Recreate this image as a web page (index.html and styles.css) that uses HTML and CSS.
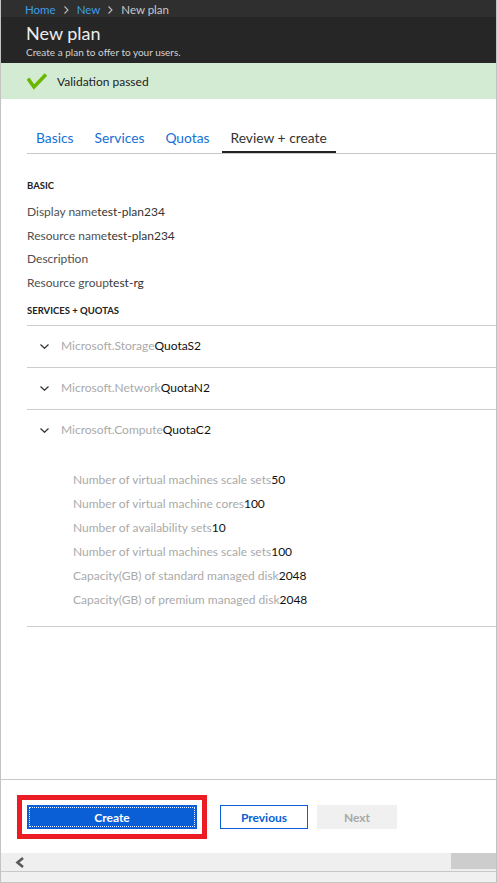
FILE: index.html
```html
<!DOCTYPE html>
<html lang="en">
<head>
<meta charset="utf-8">
<title>New plan</title>
<link rel="stylesheet" href="styles.css">
</head>
<body>
<div class="page">
  <div class="crumbs">
    <span class="crumb-link">Home</span>
    <svg class="crumb-sep" width="5" height="8" viewBox="0 0 5 8"><polyline points="0.5,0.5 4,4 0.5,7.5" fill="none" stroke="#bdbdbd" stroke-width="1.1"/></svg>
    <span class="crumb-link">New</span>
    <svg class="crumb-sep" width="5" height="8" viewBox="0 0 5 8"><polyline points="0.5,0.5 4,4 0.5,7.5" fill="none" stroke="#bdbdbd" stroke-width="1.1"/></svg>
    <span class="crumb-cur">New plan</span>
  </div>
  <div class="head">
    <div class="title">New plan</div>
    <div class="sub">Create a plan to offer to your users.</div>
  </div>
  <div class="banner">
    <svg class="check" width="20" height="17" viewBox="0 0 20 17"><polyline points="1,5.5 7,14 19,1.5" fill="none" stroke="#6bb700" stroke-width="3.6" stroke-linejoin="miter"/></svg>
    <span class="banner-text">Validation passed</span>
  </div>
  <div class="main">
    <div class="tabs">
      <div class="tab">Basics</div>
      <div class="tab">Services</div>
      <div class="tab">Quotas</div>
      <div class="tab active">Review + create</div>
    </div>
    <div class="sect">BASIC</div>
    <div class="row">Display name<span>test-plan234</span></div>
    <div class="row">Resource name<span>test-plan234</span></div>
    <div class="row">Description</div>
    <div class="row">Resource group<span>test-rg</span></div>
    <div class="sect sect2">SERVICES + QUOTAS</div>
    <div class="acc">
      <div class="acc-item">
        <div class="acc-head">
          <svg class="chev" width="9" height="5" viewBox="0 0 9 5"><polyline points="0.5,0.5 4.5,4.3 8.5,0.5" fill="none" stroke="#333" stroke-width="1.2"/></svg>
          <span class="ns">Microsoft.Storage</span><span class="q">QuotaS2</span>
        </div>
      </div>
      <div class="acc-item">
        <div class="acc-head">
          <svg class="chev" width="9" height="5" viewBox="0 0 9 5"><polyline points="0.5,0.5 4.5,4.3 8.5,0.5" fill="none" stroke="#333" stroke-width="1.2"/></svg>
          <span class="ns">Microsoft.Network</span><span class="q">QuotaN2</span>
        </div>
      </div>
      <div class="acc-item">
        <div class="acc-head">
          <svg class="chev" width="9" height="5" viewBox="0 0 9 5"><polyline points="0.5,0.5 4.5,4.3 8.5,0.5" fill="none" stroke="#333" stroke-width="1.2"/></svg>
          <span class="ns">Microsoft.Compute</span><span class="q">QuotaC2</span>
        </div>
        <div class="acc-body">
          <div class="detail">Number of virtual machines scale sets<span>50</span></div>
          <div class="detail">Number of virtual machine cores<span>100</span></div>
          <div class="detail">Number of availability sets<span>10</span></div>
          <div class="detail">Number of virtual machines scale sets<span>100</span></div>
          <div class="detail">Capacity(GB) of standard managed disk<span>2048</span></div>
          <div class="detail">Capacity(GB) of premium managed disk<span>2048</span></div>
        </div>
      </div>
    </div>
  </div>
  <div class="footer">
    <div class="highlight">
      <button class="btn btn-create">Create</button>
    </div>
    <button class="btn btn-prev">Previous</button>
    <button class="btn btn-next">Next</button>
  </div>
  <div class="hscroll">
    <svg class="scroll-arrow" width="10" height="11" viewBox="0 0 10 11"><polyline points="8,1 2.5,5.5 8,10" fill="none" stroke="#5a5a5a" stroke-width="2.6"/></svg>
    <div class="thumb"></div>
  </div>
  <div class="bottom-strip"></div>
</div>
</body>
</html>
```

FILE: styles.css
```css
* { box-sizing: border-box; }
html, body { margin: 0; padding: 0; }
body { font-family: Lato, "Open Sans", sans-serif; background: #fff; }

.page {
  width: 497px;
  height: 883px;
  display: flex;
  flex-direction: column;
  border-left: 1px solid #c3c3c3;
  border-right: 1px solid #c3c3c3;
  border-bottom: 1px solid #c3c3c3;
}

.crumbs {
  height: 17px;
  flex: none;
  background: #2f2f2f;
  display: flex;
  align-items: center;
  padding: 3px 0 0 24px;
  font-size: 11.5px;
  line-height: 14px;
}
.crumb-link { color: #3d9ce9; }
.crumb-cur { color: #c8c8c8; }
.crumb-sep { margin: 0 8px; }

.head {
  height: 46px;
  flex: none;
  background: #262626;
  padding: 5px 0 0 25px;
}
.title { font-size: 18px; line-height: 22px; color: #ededed; font-weight: 400; }
.sub { font-size: 10px; line-height: 12px; color: #d2d2d2; margin-top: 2px; }

.banner {
  height: 36px;
  flex: none;
  background: #d3ebd2;
  display: flex;
  align-items: center;
  padding-left: 26px;
}
.check { margin-right: 10px; }
.banner-text { font-size: 12px; color: #222; }

.main { flex: 1; padding-left: 26px; }

.tabs {
  display: flex;
  gap: 3px;
  margin-top: 24px;
  border-bottom: 1px solid #c8c8c8;
}
.tab {
  padding: 5px 9px 3px;
  line-height: 20px;
  font-size: 13.8px;
  color: #1570d6;
  border-bottom: 2px solid transparent;
}
.tab.active { color: #333; border-bottom-color: #222; }

.sect {
  font-size: 9.5px;
  font-weight: 700;
  color: #222;
  line-height: 16px;
  margin-top: 24px;
  margin-bottom: 6px;
}
.sect2 { margin-top: 9px; }
.row { font-size: 12px; line-height: 23.5px; color: #505050; }
.row span { color: #333; }

.acc { border-top: 1px solid #cdcdcd; }
.acc-item { border-bottom: 1px solid #cdcdcd; }
.acc-head {
  display: flex;
  align-items: center;
  padding: 10px 0 11px 13px;
  line-height: 20px;
  font-size: 12px;
}
.chev { margin-right: 12px; }
.ns { color: #aaa; }
.q { color: #111; }
.acc-body { padding: 17px 0 14px 46px; }
.detail { font-size: 12px; line-height: 24px; color: #aaa; }
.detail span { color: #111; }

.footer {
  height: 74px;
  flex: none;
  border-top: 1px solid #c8c8c8;
  display: flex;
  align-items: flex-start;
  padding: 15px 0 0 16px;
}
.highlight { border: 5px solid #ec1c24; padding: 5px; background: #fff; }
.btn {
  font-family: inherit;
  font-size: 12px;
  font-weight: 700;
  height: 24px;
  padding: 0;
  margin: 0;
  border: 0;
  display: block;
}
.btn-create {
  width: 170px;
  background: #0a5fd6;
  color: #fff;
  outline: 1px dotted #e8f0ff;
  outline-offset: -3px;
}
.btn-prev {
  width: 88px;
  margin: 10px 0 0 13px;
  background: #fff;
  border: 1px solid #0a5fd6;
  color: #0a5fd6;
}
.btn-next {
  width: 80px;
  margin: 10px 0 0 9px;
  background: #f0f0f0;
  color: #a8a8a8;
}

.hscroll {
  height: 19px;
  flex: none;
  background: #efefef;
  border-bottom: 1px solid #c8c8c8;
  display: flex;
  align-items: flex-start;
  justify-content: space-between;
}
.scroll-arrow { margin: 4px 0 0 14px; }
.thumb { width: 45px; height: 16px; background: #cdcdcd; }
.bottom-strip { height: 10px; flex: none; background: #f0f0f0; }
```
